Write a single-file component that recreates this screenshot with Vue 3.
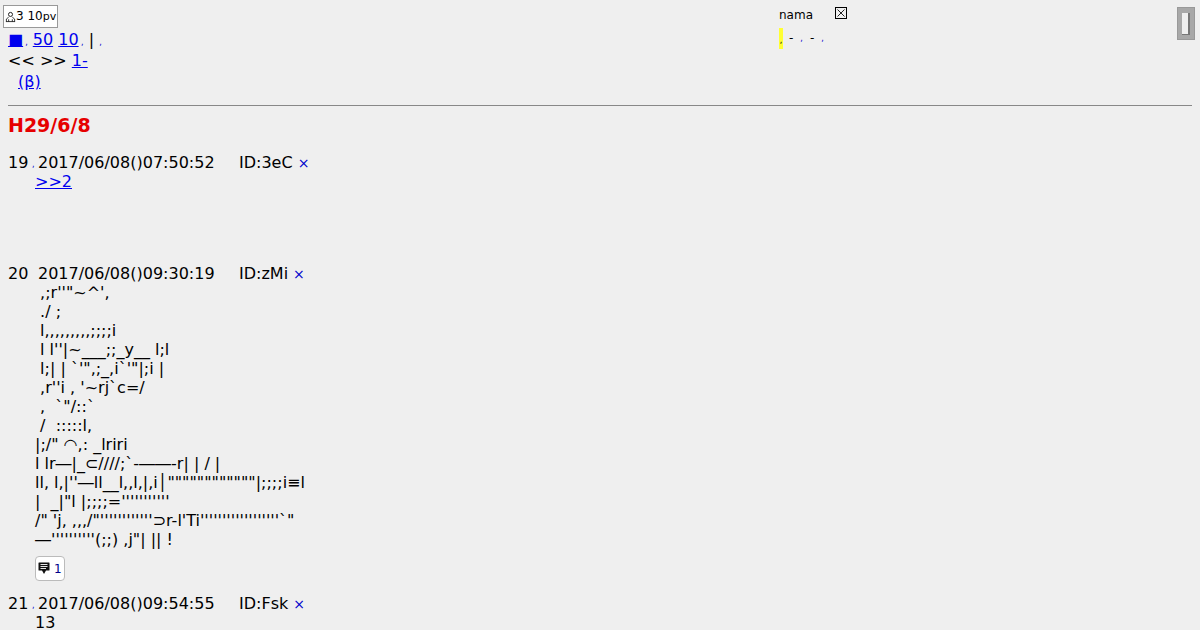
<template>
  <div class="page">
    <div class="top">
      <div class="top-left">
        <div class="counter"><svg class="user-icon" viewBox="0 0 12 12" width="11" height="12"><circle cx="6" cy="3.2" r="2.2" fill="none" stroke="#111" /><path d="M1.5 11V8.2L4 6.2M10.5 11V8.2L8 6.2M1 11H11M4 11V8.5M8 11V8.5" fill="none" stroke="#111" stroke-width="0.9" /></svg><span>3 10</span><span class="pv">pv</span></div>
        <div class="nav-row"><a class="link" href="#">■</a><span class="dot gap">,</span> <a class="link" href="#">50</a> <a class="link" href="#">10</a><span class="dot"> ,</span> | <span class="dot">,</span></div>
        <div class="nav-row">&lt;&lt; &gt;&gt; <a class="link" href="#">1-</a></div>
        <div class="nav-row beta"><a class="link" href="#">(β)</a></div>
      </div>
      <div class="top-right">
        <div class="name-row">
          <span>nama</span>
          <svg class="close-box" viewBox="0 0 12 12" width="12" height="12"><rect x="0.5" y="0.5" width="11" height="11" fill="none" stroke="#000" /><path d="M2.5 2.5L9.5 9.5M9.5 2.5L2.5 9.5" stroke="#222" /></svg>
        </div>
        <div class="mark-row"><span class="mark">,</span><span>-</span><span class="dot">,</span><span>-</span><span class="dot">,</span></div>
      </div>
      <div class="scroll-btn"><span class="scroll-inner"></span></div>
    </div>

    <hr class="rule" />
    <h2 class="day">H29/6/8</h2>

    <div v-for="post in posts" :key="post.no" class="post">
      <div class="post-head">
        <span class="no">{{ post.no }}</span><span class="sep"><span v-if="post.dot" class="dot">,</span></span><span class="date">{{ post.date }}</span><span class="id">ID:{{ post.id }}</span><span class="del">×</span>
      </div>
      <div class="body" :style="{ minHeight: post.minHeight }">
        <a v-if="post.link" class="link" href="#">{{ post.link }}</a>
        <template v-else>{{ post.text }}</template>
      </div>
      <button v-if="post.replies" class="reply" type="button">
        <svg viewBox="0 0 12 13" width="12" height="13"><path d="M1 0.5H11Q11.5 0.5 11.5 1V8Q11.5 8.5 11 8.5H8L6 12L4 8.5H1Q0.5 8.5 0.5 8V1Q0.5 0.5 1 0.5Z" fill="#111" /><path d="M2.5 2.5H9.5M2.5 4.5H9.5M2.5 6.5H8" stroke="#fff" stroke-width="0.9" /></svg>
        <span>{{ post.replies }}</span>
      </button>
    </div>
  </div>
</template>

<script setup>
const art = [
  " ,;r''\"~^',",
  " ./ ;",
  " l,,,,,,,,,;;;;i",
  " l l''|~___;;_y__ l;l",
  " l;| | `'\",;_,i`'\"|;i |",
  " ,r''i , '~rj`c=/",
  " ,  `\"/::`",
  " /  :::::l,",
  "|;/\" ◠,: _lriri",
  "l lr―|_⊂////;`-――-r| | / |",
  "ll, l,|''―ll__l,,l,|,i│\"\"\"\"\"\"\"\"\"\"\"\"|;;;;i≡l",
  "|  _|\"l |;;;;='''''''''''",
  "/\" 'j, ,,,/\"''''''''''''⊃r-l'Ti''''''''''''''''''`\"",
  "―''''''''''(;;) ,j\"| || !",
].join("\n");

const posts = [
  { no: 19, dot: true, date: "2017/06/08()07:50:52", id: "3eC", link: ">>2", minHeight: "79px" },
  { no: 20, dot: false, date: "2017/06/08()09:30:19", id: "zMi", text: art, replies: 1 },
  { no: 21, dot: true, date: "2017/06/08()09:54:55", id: "Fsk", text: "13" },
];
</script>

<style>
html,
body {
  margin: 0;
  background: #efefef;
  overflow: hidden;
}
</style>

<style scoped>
.page {
  height: 630px;
  padding: 0 8px;
  box-sizing: border-box;
  overflow: hidden;
  font-family: "DejaVu Sans", sans-serif;
  font-size: 16px;
  line-height: 19px;
  color: #000;
  background: #efefef;
}

.top {
  display: flex;
  height: 105px;
}

.top-left {
  flex: none;
  width: 771px;
  padding-top: 5px;
}

.counter {
  display: flex;
  align-items: center;
  box-sizing: border-box;
  width: 55px;
  height: 23px;
  margin-left: -5px;
  margin-bottom: 1px;
  padding-left: 1px;
  border: 1px solid #999;
  background: #fff;
  font-size: 12px;
  white-space: pre;
}

.user-icon {
  flex: none;
}

.pv {
  font-size: 11px;
}

.nav-row {
  height: 21px;
  line-height: 21px;
  white-space: pre;
}

.beta {
  padding-left: 10px;
}

.link {
  color: #0000ee;
  text-decoration: underline;
}

.dot {
  color: #00c;
  font-size: 8px;
}

.gap {
  margin-left: 2px;
}

.top-right {
  flex: none;
  width: 389px;
  padding-top: 6px;
  font-size: 12px;
}

.name-row {
  display: flex;
  align-items: center;
  gap: 22px;
  height: 18px;
}

.close-box {
  margin-top: -5px;
}

.mark-row {
  display: flex;
  align-items: center;
  gap: 7px;
  height: 20px;
  margin-top: 4px;
}

.mark {
  width: 4px;
  height: 21px;
  flex: none;
  background: #ffff33;
  font-size: 8px;
  line-height: 26px;
  text-align: center;
  margin-right: -1px;
}

.scroll-btn {
  flex: none;
  display: flex;
  justify-content: center;
  align-items: center;
  width: 18px;
  height: 33px;
  margin-top: 7px;
  margin-left: 9px;
  box-sizing: border-box;
  border: 1px solid #999;
  background: #a8a8a8;
}

.scroll-inner {
  width: 6px;
  height: 21px;
  background: #efefef;
  border-right: 2px solid #777;
  border-bottom: 1px solid #777;
}

.rule {
  height: 1px;
  margin: 0;
  border: none;
  background: #888;
}

.day {
  margin: 8px 0 17px;
  height: 22px;
  font-size: 19px;
  line-height: 22px;
  font-weight: bold;
  color: #e60000;
}

.post {
  margin-bottom: 13px;
}

.post-head {
  display: flex;
  height: 19px;
  white-space: pre;
}

.no {
  width: 20px;
}

.sep {
  width: 10px;
  font-size: 8px;
  padding-left: 4px;
  box-sizing: border-box;
  line-height: 24px;
}

.date {
  width: 201px;
}

.del {
  margin-left: 5px;
  padding-top: 1px;
  color: #00c;
  font-size: 14px;
}

.body {
  margin-left: 27px;
  white-space: pre;
}

.reply {
  display: flex;
  align-items: center;
  gap: 4px;
  box-sizing: border-box;
  width: 30px;
  height: 25px;
  margin: 7px 0 0 27px;
  padding: 0 0 0 2px;
  border: 1px solid #bbb;
  border-radius: 4px;
  background: #fff;
  color: #00008b;
  font-family: inherit;
  font-size: 12px;
}
</style>
